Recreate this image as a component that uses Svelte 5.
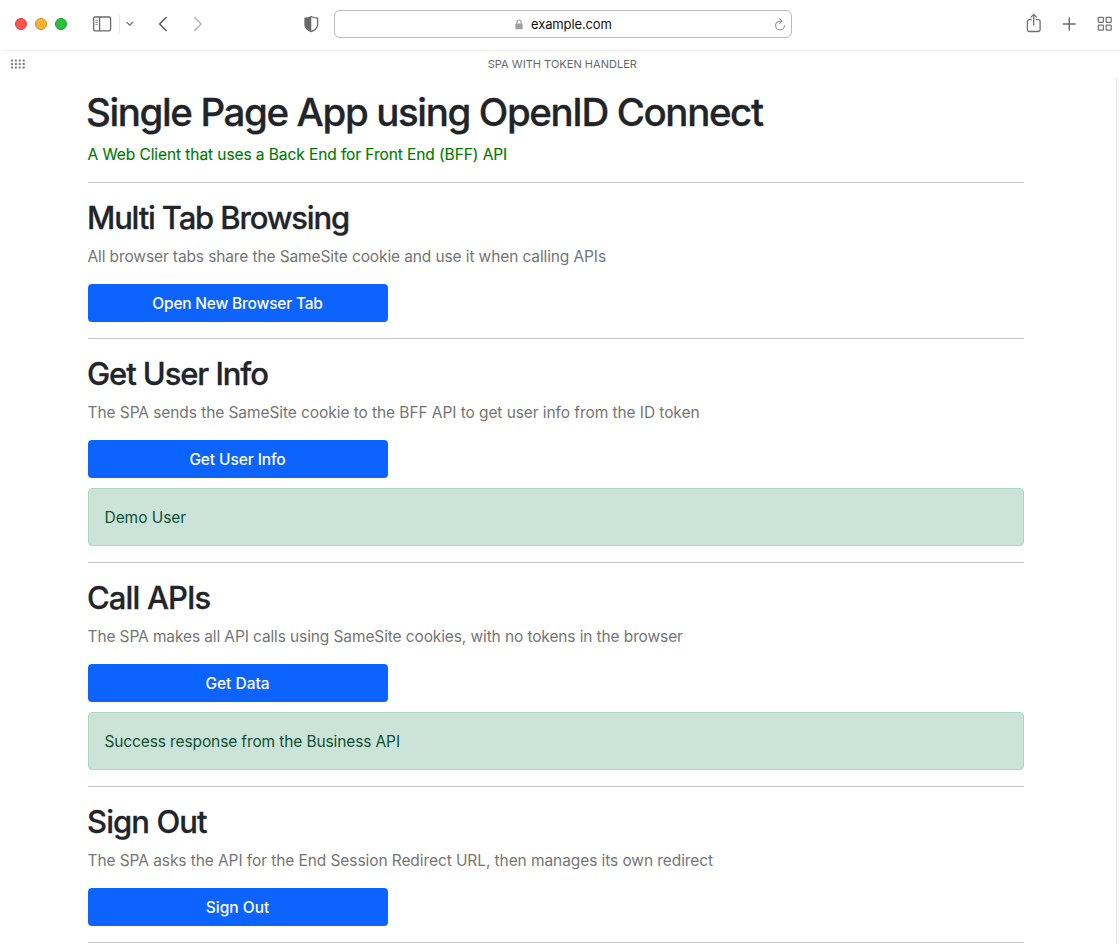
<script>
  const sections = [
    {
      title: 'Multi Tab Browsing', titleGap: -1.16,
      text: 'All browser tabs share the SameSite cookie and use it when calling APIs', textGap: -0.115,
      action: 'Open New Browser Tab', actionGap: -0.2,
    },
    {
      title: 'Get User Info', titleGap: -1.1,
      text: 'The SPA sends the SameSite cookie to the BFF API to get user info from the ID token', textGap: -0.076,
      action: 'Get User Info', actionGap: -0.1,
      result: 'Demo User', resultGap: -0.05,
    },
    {
      title: 'Call APIs', titleGap: -0.87,
      text: 'The SPA makes all API calls using SameSite cookies, with no tokens in the browser', textGap: -0.115,
      action: 'Get Data', actionGap: 0,
      result: 'Success response from the Business API', resultGap: -0.12,
    },
    {
      title: 'Sign Out', titleGap: -0.9,
      text: 'The SPA asks the API for the End Session Redirect URL, then manages its own redirect', textGap: -0.083,
      action: 'Sign Out', actionGap: 0,
    },
  ];
  const dots = [0, 1, 2, 3].flatMap((c) => [0, 1, 2].map((r) => [c * 3.9, r * 3.5]));
</script>

<div class="window">
  <header class="toolbar">
    <div class="lights"><i class="red"></i><i class="amber"></i><i class="green"></i></div>
    <svg class="sidebar" width="20" height="16" viewBox="0 0 20 16" fill="none" stroke="#69696a" stroke-width="1.3">
      <rect x="1.6" y="1" width="17" height="13.8" rx="1.6" />
      <path d="M7.6 1v13.8" />
      <path d="M3.3 4.3h2.6M3.3 6.5h2.6M3.3 8.7h2.6" stroke-width="1" stroke="#8b8b8b" />
    </svg>
    <span class="divider"></span>
    <svg class="chevron" width="8" height="6" viewBox="0 0 8 6" fill="none" stroke="#808080" stroke-width="1.5" stroke-linecap="round" stroke-linejoin="round"><path d="M1 1.5 3.8 4.1 6.6 1.5" /></svg>
    <svg class="back" width="10" height="16" viewBox="0 0 10 16" fill="none" stroke="#606061" stroke-width="1.6" stroke-linecap="round" stroke-linejoin="round"><path d="M8.2 1.5 1.6 8l6.6 6.5" /></svg>
    <svg class="forward" width="10" height="16" viewBox="0 0 10 16" fill="none" stroke="#b4b4b4" stroke-width="1.6" stroke-linecap="round" stroke-linejoin="round"><path d="M1.6 1.5 8.2 8l-6.6 6.5" /></svg>
    <svg class="shield" width="16" height="18" viewBox="0 0 16 18">
      <path d="M8.3 1.5C10 2.5 12.2 3.1 14.6 3.2V10c0 3.1-2.5 5-6.3 6.6C4.5 15 2 13.1 2 10V3.2C4.4 3.1 6.6 2.5 8.3 1.5Z" fill="none" stroke="#69696a" stroke-width="1.3" stroke-linejoin="round" />
      <path d="M8.3 1.5V16.6C4.5 15 2 13.1 2 10V3.2C4.4 3.1 6.6 2.5 8.3 1.5Z" fill="#69696a" />
    </svg>
    <div class="address">
      <svg class="lock" width="8" height="11" viewBox="0 0 8 11">
        <rect x="0.3" y="4.5" width="7.4" height="5.7" rx="0.9" fill="#a0a0a0" />
        <path d="M1.9 5V3.1a2.1 2.1 0 0 1 4.2 0V5" fill="none" stroke="#a0a0a0" stroke-width="1.2" />
      </svg>
      <span>example.com</span>
      <svg class="reload" width="12" height="13" viewBox="0 0 12 13" fill="none" stroke="#8f8f8f" stroke-width="1.1" stroke-linecap="round" stroke-linejoin="round">
        <path d="M7.2 3.2H6A4.4 4.4 0 1 0 10.4 7.6" />
        <path d="M5.6.9 8 3.2 5.6 5.6" />
      </svg>
    </div>
    <svg class="share" width="16" height="20" viewBox="0 0 16 20" fill="none" stroke="#707071" stroke-width="1.3" stroke-linecap="round" stroke-linejoin="round">
      <path d="M5.2 6.6H3.1a1.7 1.7 0 0 0-1.7 1.7v8.5a1.7 1.7 0 0 0 1.7 1.7h9.3a1.7 1.7 0 0 0 1.7-1.7V8.3a1.7 1.7 0 0 0-1.7-1.7h-2.1" />
      <path d="M7.75 12V1.4M5 4.1 7.75 1.4l2.75 2.7" />
    </svg>
    <svg class="plus" width="14" height="14" viewBox="0 0 14 14" stroke="#69696a" stroke-width="1.4" stroke-linecap="round"><path d="M7.2 1v12M1.2 7h12" /></svg>
    <svg class="grid" width="16" height="16" viewBox="0 0 16 16" fill="none" stroke="#737374" stroke-width="1.2">
      <rect x="1.3" y="1.3" width="5.1" height="5.1" rx=".7" /><rect x="9.1" y="1.3" width="5.1" height="5.1" rx=".7" />
      <rect x="1.3" y="9.1" width="5.1" height="5.1" rx=".7" /><rect x="9.1" y="9.1" width="5.1" height="5.1" rx=".7" />
    </svg>
  </header>

  <div class="tabbar">
    <svg width="15" height="11" viewBox="0 0 15 11" fill="#77777a">
      {#each dots as [x, y]}<rect {x} y={y + 0.5} width="2" height="2" rx=".5" />{/each}
    </svg>
    <span>SPA WITH TOKEN HANDLER</span>
  </div>

  <div class="page">
    <main>
      <h1>Single Page App using OpenID Connect</h1>
      <h6>A Web Client that uses a Back End for Front End (BFF) API</h6>
      {#each sections as s}
        <section>
          <h2 style="letter-spacing:{s.titleGap}px">{s.title}</h2>
          <p style="letter-spacing:{s.textGap}px">{s.text}</p>
          <button style="letter-spacing:{s.actionGap}px">{s.action}</button>
          {#if s.result}
            <div class="alert" style="letter-spacing:{s.resultGap}px">{s.result}</div>
          {/if}
        </section>
      {/each}
      <hr />
    </main>
    <div class="scroll"></div>
  </div>
</div>

<style>
  :global(body) { background: #fff; }
  .window {
    width: 1120px; height: 944px; overflow: hidden; background: #fff;
    display: flex; flex-direction: column;
    font-family: Inter, "Liberation Sans", sans-serif; color: #212529;
  }
  svg { display: block; flex: none; }
  .toolbar {
    box-sizing: border-box; height: 51px; flex: none; margin-left: 3px;
    border-bottom: 1px solid #ededed; padding: 0 7px 3px 12px;
    display: flex; align-items: center;
  }
  .lights { display: flex; gap: 8px; }
  .lights i { box-sizing: border-box; width: 12px; height: 12px; border-radius: 50%; border: 1px solid; }
  .lights .red { background: #ff544d; border-color: #d5403b; }
  .lights .amber { background: #fdb32b; border-color: #c98d27; }
  .lights .green { background: #28c23a; border-color: #1b9b2c; }
  .sidebar { margin-left: 25px; }
  .divider { width: 1px; height: 18px; background: #e8e8e8; margin-left: 7px; }
  .chevron { margin-left: 6px; }
  .back { margin-left: 24px; }
  .forward { margin-left: 25px; }
  .shield { margin-left: 100px; }
  .address {
    box-sizing: border-box; width: 458px; height: 28px; margin-left: 15px;
    border: 1px solid #bcbcbc; border-radius: 6px;
    display: flex; align-items: center; padding: 1px 5px 0 180px;
    font-size: 13px; letter-spacing: -0.12px; color: #111;
  }
  .address span { margin-left: 8px; line-height: 16px; }
  .reload { margin-left: auto; }
  .share { margin: -2px 0 0 234px; }
  .plus { margin-left: 20px; }
  .grid { margin-left: auto; }
  .tabbar {
    height: 27px; flex: none; display: flex; align-items: center;
    padding-left: 11px; font-size: 11px; color: #68686a;
  }
  .tabbar svg { margin-left: -0.3px; }
  .tabbar span { margin-left: 462px; padding-bottom: 2px; letter-spacing: 0.03px; }
  .page { flex: 1; min-height: 0; display: flex; justify-content: space-between; }
  main { width: 936px; margin-left: 88px; padding-top: 10px; }
  h1, h2, h6, p { margin: 0; white-space: nowrap; }
  h1, h2 { font-weight: 500; -webkit-text-stroke: 0.3px #212529; }
  h1 { font-size: 38.5px; line-height: 48px; letter-spacing: -1.39px; margin-left: -2px; }
  h6 { margin: 9px 0 0 -0.5px; height: 37px; font-size: 15.5px; line-height: 20px; font-weight: 400; -webkit-text-stroke: 0.15px #007a00; letter-spacing: -0.08px; color: #007a00; }
  section { border-top: 1px solid #c4c5c6; padding: 16px 0; }
  h2 { font-size: 31px; line-height: 38px; margin-left: -1px; }
  p { margin: 8px 0 0 -0.5px; font-size: 15.5px; line-height: 24px; color: #757575; }
  button {
    display: block; width: 300px; height: 38px; margin: 15px 0 0; padding: 0 1px 0 0;
    border: 0; border-radius: 4px; background: #0d63fd; color: #fff;
    font-family: inherit; font-size: 15.5px; font-weight: 500;
  }
  .alert {
    box-sizing: border-box; height: 58px; margin-top: 10px; padding: 16px 15.5px;
    border: 1px solid #afd5c3; border-radius: 4px; background: #cce3d9;
    font-size: 15.5px; line-height: 25px; color: #0f5132;
  }
  hr { margin: 0; border: 0; height: 1px; background: #c4c5c6; }
  .scroll { box-sizing: border-box; width: 4px; border-left: 1px solid #e6e6e6; background: #fafafa; }
</style>
